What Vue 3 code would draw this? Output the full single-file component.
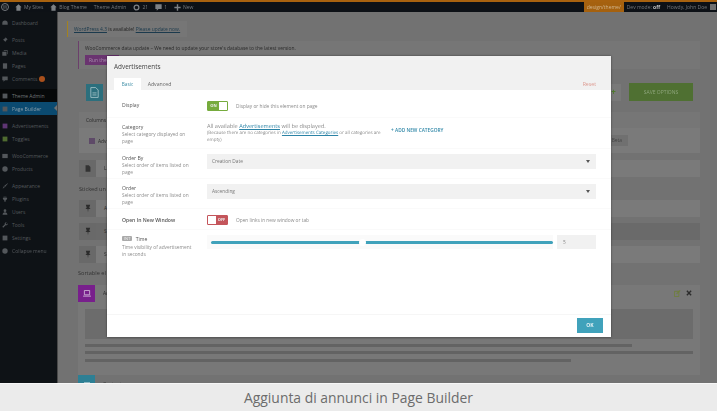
<script setup>
const topLinks = [
  { icon: 'home', label: 'My Sites' },
  { icon: 'home', label: 'Blog Theme' },
  { label: 'Theme Admin' },
  { icon: 'sync', label: '21' },
  { icon: 'bubble', label: '1' },
  { icon: 'plus', label: 'New' }
]

const shapes = {
  gauge: 'M5 1a4.500 4.500 0 0 1 4.500 4.500V8H.5V5.500A4.500 4.500 0 0 1 5 1z',
  pin: 'M6 .5 9.500 4 8 4.500 6.500 7 5.500 8 2 4.500 3 3.500 5.500 2zM3.500 6.500 .5 9.500',
  media: 'M.5 3h7v6.500h-7zM3 .5h6.500v6.500H8.500V1.500H3z',
  page: 'M1.500 .5h7v9h-7z',
  bubble: 'M.5 1h9v6H5L2.500 9.500V7h-2z',
  box: 'M.5 1.500h9v7h-9z',
  square: 'M1 1h8v8H1z',
  circle: 'M5 .5a4.500 4.500 0 1 1 0 9 4.500 4.500 0 0 1 0-9z',
  brush: 'M9.500 .5 10 1 5 6.500 3.500 5zM3 5.500 4.500 7 1 9.500z',
  plug: 'M3 .5h1v2.500h2V.5h1V3h1.500v2L6 7.500v2H4v-2L1.500 5V3H3z',
  user: 'M5 .5a2.300 2.300 0 1 1 0 4.600A2.300 2.300 0 0 1 5 .5zM1 9.500C1 7 2.500 5.500 5 5.500S9 7 9 9.500z',
  wrench: 'M9.500 2 7.500 4 6 2.500 8 .5C6 0 4 1.500 4.500 4L.5 8l1.500 1.500L6 5.500C8.500 6 10 4 9.500 2z'
}

const menu = [
  { label: 'Dashboard', top: 4, shape: 'gauge' },
  { label: 'Posts', top: 4, shape: 'pin' },
  { label: 'Media', shape: 'media' },
  { label: 'Pages', shape: 'page' },
  { label: 'Comments', badge: true, shape: 'bubble' },
  { label: 'Theme Admin', top: 4, cls: 'dark', shape: 'square' },
  { label: 'Page Builder', cls: 'current', shape: 'square' },
  { label: 'Advertisements', top: 4, shape: 'square', color: '#5e3573' },
  { label: 'Toggles', shape: 'square', color: '#4f6b30' },
  { label: 'WooCommerce', top: 4, shape: 'box' },
  { label: 'Products', shape: 'circle' },
  { label: 'Appearance', top: 4, shape: 'brush' },
  { label: 'Plugins', shape: 'plug' },
  { label: 'Users', shape: 'user' },
  { label: 'Tools', shape: 'wrench' },
  { label: 'Settings', shape: 'square' },
  { label: 'Collapse menu', shape: 'circle' }
]

const stuck = [
  { text: 'A', shade: '' },
  { text: 'S', shade: 'shade' },
  { text: 'S', shade: '' }
]
</script>

<template>
  <div class="shot">
    <div class="screen">
      <header class="adminbar">
        <span class="wp">W</span>
        <span v-for="link in topLinks" :key="link.label" class="top-link">
          <svg v-if="link.icon === 'home'" width="7" height="7" viewBox="0 0 10 10"><path d="M5 0.5 0.5 4.500h1.500V9.500h6V4.500h1.500z" fill="#7d8185" /></svg>
          <svg v-if="link.icon === 'sync'" width="7" height="7" viewBox="0 0 10 10"><circle cx="5" cy="5" r="3.400" fill="none" stroke="#7d8185" stroke-width="1.800" /></svg>
          <svg v-if="link.icon === 'bubble'" width="7" height="7" viewBox="0 0 10 10"><path d="M0.500 0.500h9v6.500H5L2.500 9.500V7H0.500z" fill="#7d8185" /></svg>
          <svg v-if="link.icon === 'plus'" width="7" height="7" viewBox="0 0 10 10"><path d="M4 0.500h2V4h3.500v2H6v3.500H4V6H0.500V4H4z" fill="#7d8185" /></svg>
          {{ link.label }}
        </span>
        <span class="bar-right">
          <span class="branch">design/theme/</span>
          <span class="dev">Dev mode: <b>off</b></span>
          <span class="howdy">Howdy, John Doe</span>
          <span class="avatar"></span>
        </span>
      </header>

      <div class="body">
        <aside class="sidebar">
          <div
            v-for="item in menu"
            :key="item.label"
            class="menu-item"
            :class="item.cls"
            :style="{ marginTop: (item.top || 0) + 'px' }"
          >
            <svg class="menu-icon" width="6" height="6" viewBox="0 0 10 10">
              <path :d="shapes[item.shape]" :fill="item.color || '#53575b'" />
            </svg>
            {{ item.label }}
            <span v-if="item.badge" class="badge"></span>
          </div>
        </aside>

        <main class="content">
          <div class="notice notice-yellow">
            <span class="u">WordPress 4.3</span> is available! <span class="u">Please update now.</span>
          </div>
          <div class="notice notice-purple">
            <div>WooCommerce data update – We need to update your store's database to the latest version.</div>
            <span class="run-btn">Run the</span>
          </div>

          <div class="toolbar">
            <span class="tool-icon teal">
              <svg width="9" height="11" viewBox="0 0 11 13"><path d="M1 .5h6l3 3v9H1zM3 7h5M3 9.500h5" fill="none" stroke="#a9c6cc" stroke-width="1" /></svg>
            </span>
            <span class="toolbar-fill"></span>
            <span class="plus-box">+</span>
            <span class="save">SAVE OPTIONS</span>
          </div>

          <div class="panel">
            <div class="panel-head">Columns</div>
            <div class="panel-row">
              <span class="sq"></span>Adv
              <span class="panel-btn">Beta</span>
            </div>
          </div>

          <div class="stub-row first-stub">
            <span class="tool-icon grey">
              <svg width="6" height="7" viewBox="0 0 11 13"><path d="M1 .5h6l3 3v9H1z" fill="#333" /></svg>
            </span>
            <span class="stub-fill">L</span>
          </div>
          <div class="section-label">Sticked un</div>

          <div v-for="(row, i) in stuck" :key="i" class="stub-row stuck">
            <span class="tool-icon grey">
              <svg width="6" height="9" viewBox="0 0 7 10"><path d="M1 .5h5L5 4l1.500 1.500H4L3.500 9.500 3 5.500H.5L2 4z" fill="#2c2c2c" /></svg>
            </span>
            <span class="stub-fill" :class="row.shade">{{ row.text }}</span>
          </div>

          <div class="section-label last">Sortable el</div>

          <div class="adv-card">
            <div class="adv-head">
              <span class="tool-icon purple">
                <svg width="8" height="7" viewBox="0 0 9 8"><path d="M1.500 .5h6v5h-6zM0 7h9" fill="none" stroke="#cfb3d6" stroke-width="1" /></svg>
              </span>
              <span class="adv-name">Adv</span>
              <span class="adv-actions">
                <svg width="7" height="7" viewBox="0 0 8 8"><path d="M.5 1.500h5v6h-5z" fill="none" stroke="#6f7f3a" /><path d="M3 4.500 7 .5" stroke="#6f7f3a" stroke-width="1.300" /></svg>
                <svg width="6" height="6" viewBox="0 0 7 7"><path d="M1 1l5 5M6 1 1 6" stroke="#2c2c2c" stroke-width="1.600" /></svg>
              </span>
            </div>
            <div class="adv-body">
              <div class="thumb"></div>
              <div class="line l1"></div>
              <div class="line l2"></div>
              <div class="line l3"></div>
            </div>
          </div>

          <div class="stub-row content-row">
            <span class="tool-icon teal-light">
              <svg width="6" height="6" viewBox="0 0 10 10"><path d="M0 2h10v6H0z" fill="#a9c6cc" /></svg>
            </span>
            <span class="content-name">Content</span>
          </div>
        </main>
      </div>

      <section class="modal">
        <div class="modal-head">
          <div class="modal-title">Advertisements</div>
          <div class="tabs">
            <span class="tab active">Basic</span>
            <span class="tab">Advanced</span>
            <span class="reset">Reset</span>
          </div>
        </div>

        <div class="form">
          <div class="field f-display">
            <div class="label"><b>Display</b></div>
            <div class="control">
              <span class="switch on"><span class="state">ON</span><span class="knob"></span></span>
              <span class="hint">Display or hide this element on page</span>
            </div>
          </div>

          <div class="field f-category">
            <div class="label"><b>Category</b><small>Select category displayed on page</small></div>
            <div class="control">
              <div class="cat-text">
                <div class="cat-main">All available <a>Advertisements</a> will be displayed.</div>
                <div>(Because there are no categories in <a>Advertisements Categories</a> or all categories are empty)</div>
              </div>
              <span class="add-cat">+ ADD NEW CATEGORY</span>
            </div>
          </div>

          <div class="field f-select">
            <div class="label"><b>Order By</b><small>Select order of items listed on page</small></div>
            <div class="control">
              <div class="select">Creation Date<i class="caret"></i></div>
            </div>
          </div>

          <div class="field f-select">
            <div class="label"><b>Order</b><small>Select order of items listed on page</small></div>
            <div class="control">
              <div class="select">Ascending<i class="caret"></i></div>
            </div>
          </div>

          <div class="field f-window">
            <div class="label"><b>Open In New Window</b></div>
            <div class="control">
              <span class="switch off"><span class="knob"></span><span class="state">OFF</span></span>
              <span class="hint">Open links in new window or tab</span>
            </div>
          </div>

          <div class="field f-time">
            <div class="label"><b><em class="tag">INT</em> Time</b><small>Time visibility of advertisement in seconds</small></div>
            <div class="control">
              <div class="slider">
                <div class="rail"><span class="thumb-dot"></span></div>
              </div>
              <div class="num">5</div>
            </div>
          </div>
        </div>

        <div class="modal-foot"><span class="ok">OK</span></div>
      </section>
    </div>

    <footer class="caption">Aggiunta di annunci in Page Builder</footer>
  </div>
</template>

<style>
html,
body {
  margin: 0;
  background: #ebebeb;
}
</style>

<style scoped>
.shot {
  width: 717px;
  height: 411px;
  overflow: hidden;
  font-family: "Open Sans", "Liberation Sans", sans-serif;
  display: flex;
  flex-direction: column;
}

.screen {
  position: relative;
  height: 384px;
  flex: none;
  overflow: hidden;
  background: #727272;
  border-bottom: 1px solid #f6f6f6;
  box-sizing: border-box;
}

.adminbar {
  height: 12px;
  box-sizing: border-box;
  border-top: 2px solid #a8620f;
  background: #0d1116;
  display: flex;
  align-items: center;
  padding-left: 1px;
  font-size: 5px;
  color: #75797d;
  white-space: nowrap;
  filter: blur(0.4px);
}

.wp {
  width: 8px;
  height: 8px;
  line-height: 7px;
  text-align: center;
  border-radius: 50%;
  border: 1px solid #75797d;
  box-sizing: border-box;
  font-size: 5px;
  margin-right: 6px;
}

.top-link {
  display: inline-flex;
  align-items: center;
  gap: 2px;
  margin-right: 7px;
}

.bar-right {
  margin-left: auto;
  display: flex;
  align-items: center;
  height: 10px;
}

.branch {
  background: #a5610f;
  color: #d2b78f;
  height: 10px;
  line-height: 10px;
  width: 40px;
  text-align: center;
  margin-right: 3px;
}

.dev {
  margin-right: 7px;
}

.dev b {
  color: #c2c2c2;
}

.avatar {
  width: 6px;
  height: 6px;
  margin: 0 1px 0 3px;
  background: #6f6f6f;
}

.body {
  display: flex;
  height: 372px;
  filter: blur(0.4px);
}

.sidebar {
  width: 58px;
  flex: none;
  background: #0e1216;
  border-right: 1px solid #4a4a4a;
  box-sizing: border-box;
  font-size: 5px;
  color: #55595d;
}

.menu-item {
  display: flex;
  align-items: center;
  height: 13px;
  padding-left: 2px;
  white-space: nowrap;
}

.menu-icon {
  margin-right: 4px;
  flex: none;
}

.menu-item.dark {
  background: #060809;
  color: #72767a;
}

.menu-item.current {
  background: #0b4a70;
  color: #8a9eaa;
  position: relative;
}

.menu-item.current::after {
  content: "";
  position: absolute;
  right: 0;
  top: 3px;
  border: 3px solid transparent;
  border-right-color: #727272;
}

.badge {
  width: 6px;
  height: 6px;
  border-radius: 50%;
  margin-left: 2px;
  background: #a9501c;
}

.content {
  flex: 1;
  padding: 9px 0 0 9px;
  min-width: 0;
  font-size: 4.9px;
  color: #2a2a2a;
  white-space: nowrap;
}

.notice {
  background: #767676;
  box-sizing: border-box;
}

.notice-yellow {
  width: 120px;
  height: 16px;
  line-height: 16px;
  padding-left: 6px;
  border-left: 1px solid #a3821f;
  color: #222;
}

.u {
  text-decoration: underline;
  color: #1b3a4d;
}

.notice-purple {
  width: 622px;
  height: 28px;
  margin: 4px 0 0 11px;
  border-left: 1px solid #6b3f6b;
  padding: 4px 0 0 6px;
}

.run-btn {
  display: block;
  margin-top: 4px;
  width: 34px;
  height: 10px;
  line-height: 10px;
  background: #6a3470;
  color: #a88fae;
  padding-left: 4px;
  box-sizing: border-box;
}

.toolbar {
  display: flex;
  align-items: center;
  margin: 14px 0 0 19px;
  height: 18px;
  width: 607px;
}

.tool-icon {
  width: 17px;
  height: 17px;
  display: flex;
  align-items: center;
  justify-content: center;
  flex: none;
}

.teal {
  background: #2c6f7d;
}

.teal-light {
  background: #2d7f94;
}

.purple {
  background: #781f8c;
}

.grey {
  background: #696969;
}

.toolbar-fill {
  flex: 1;
}

.plus-box {
  width: 15px;
  height: 17px;
  line-height: 16px;
  text-align: center;
  font-size: 8px;
  font-weight: 700;
  color: #4e7a2c;
  background: #797979;
  margin-right: 8px;
}

.save {
  width: 64px;
  height: 18px;
  line-height: 18px;
  text-align: center;
  background: #4f7032;
  color: #8ea57c;
  font-size: 5px;
}

.panel {
  margin: 11px 0 0 12px;
  width: 621px;
  height: 41px;
  background: #767676;
}

.panel-head {
  height: 16px;
  line-height: 16px;
  padding-left: 7px;
}

.panel-row {
  display: flex;
  align-items: center;
  gap: 3px;
  height: 25px;
  padding-left: 10px;
  background: #7a7a7a;
}

.sq {
  width: 6px;
  height: 6px;
  background: #5e4a68;
}

.panel-btn {
  margin: 0 72px 0 auto;
  width: 23px;
  height: 11px;
  line-height: 11px;
  text-align: right;
  padding-right: 6px;
  box-sizing: border-box;
  background: #707070;
  color: #444;
}

.stub-row {
  display: flex;
  align-items: center;
  width: 621px;
  margin: 0 0 0 12px;
  height: 17px;
}

.first-stub {
  margin-top: 7px;
}

.stub-fill {
  flex: 1;
  height: 17px;
  line-height: 17px;
  padding-left: 8px;
  background: #7a7a7a;
}

.stub-fill.shade {
  background: #6a6a6a;
}

.section-label {
  margin: 8px 0 7px 12px;
  font-size: 5.6px;
  height: 8px;
  line-height: 8px;
  color: #333;
}

.section-label.last {
  margin: 6px 0 8px 11px;
}

.stuck + .stuck {
  margin-top: 6px;
}

.adv-card {
  margin-left: 11px;
  width: 622px;
  height: 90px;
  background: #787878;
  box-sizing: border-box;
}

.adv-head {
  display: flex;
  align-items: flex-start;
  height: 24px;
}

.adv-name {
  margin: 5px 0 0 8px;
}

.adv-actions {
  margin: 5px 8px 0 auto;
  display: flex;
  gap: 5px;
}

.adv-body {
  padding: 0 7px;
}

.thumb {
  height: 30px;
  background: #6c6c6c;
}

.line {
  height: 3px;
  margin-top: 4.5px;
  background: #636363;
}

.l1 {
  width: 90%;
}

.l3 {
  width: 80%;
}

.content-row {
  margin-left: 11px;
}

.content-name {
  margin-left: 8px;
}

.modal {
  position: absolute;
  left: 107px;
  top: 56px;
  width: 504px;
  height: 281px;
  background: #fff;
  box-shadow: 0 0 2px rgba(0, 0, 0, 0.5);
  display: flex;
  flex-direction: column;
  color: #555;
  filter: blur(0.35px);
}

.modal-head {
  height: 34px;
  background: #f1f1f1;
  flex: none;
  display: flex;
  flex-direction: column;
  justify-content: space-between;
}

.modal-title {
  font-size: 6.4px;
  color: #444;
  padding: 6px 0 0 7px;
}

.tabs {
  display: flex;
  padding-left: 7px;
  font-size: 5.2px;
  height: 12px;
  color: #666;
}

.tab {
  height: 12px;
  line-height: 12px;
  width: 27px;
  text-align: center;
}

.tab.active {
  background: #fff;
  color: #3f8ea6;
  font-size: 4.7px;
}

.tab + .tab {
  width: 37px;
}

.reset {
  margin-left: auto;
  margin-right: 15px;
  line-height: 12px;
  color: #dd9a90;
}

.form {
  height: 224px;
  flex: none;
}

.field {
  display: flex;
  padding: 0 15px;
  box-sizing: border-box;
  border-bottom: 1px solid #fafafa;
}

.label {
  width: 85px;
  padding-right: 13px;
  box-sizing: border-box;
  flex: none;
  font-size: 4.9px;
  line-height: 7px;
  color: #8c8c8c;
}

.label b {
  display: block;
  font-weight: 400;
  color: #555;
  font-size: 5.1px;
  line-height: 8px;
  white-space: nowrap;
}

.label small {
  display: block;
  font-size: 4.8px;
}

.control {
  flex: 1;
  min-width: 0;
  display: flex;
  align-items: flex-start;
  font-size: 4.8px;
  color: #8a8a8a;
}

.hint {
  line-height: 10px;
}

.f-display {
  height: 28px;
  padding-top: 11px;
}

.f-category {
  height: 31px;
  padding-top: 5px;
}

.f-select {
  height: 30px;
  padding-top: 5px;
}

.f-window {
  height: 21px;
  padding-top: 6px;
}

.f-window .label {
  margin-top: 1px;
}

.f-window .label b {
  font-weight: 600;
}

.f-time {
  height: 54px;
  padding-top: 5px;
  border-bottom: 0;
}

.f-time .label b {
  margin-bottom: 1px;
}

.switch {
  width: 21px;
  height: 10px;
  border-radius: 1px;
  box-sizing: border-box;
  display: flex;
  border: 1px solid;
  flex: none;
  margin-right: 8px;
}

.switch.on {
  border-color: #76ab3d;
  background: #76ab3d;
}

.switch.off {
  border-color: #c4555b;
  background: #c4555b;
}

.state {
  flex: 1;
  text-align: center;
  color: #eee;
  font-size: 4px;
  font-weight: 700;
  line-height: 8px;
}

.knob {
  width: 8px;
  background: #fff;
  height: 8px;
  flex: none;
}

.cat-text {
  width: 176px;
  line-height: 7px;
  flex: none;
  font-size: 4.5px;
  text-rendering: geometricPrecision;
}

.cat-main {
  font-size: 5.6px;
}

.cat-text a {
  color: #2b83a6;
  text-decoration: underline;
}

.add-cat {
  margin: 4px 0 0 8px;
  color: #3188a8;
  font-weight: 600;
  font-size: 4.8px;
  line-height: 7px;
  white-space: nowrap;
}

.select {
  width: 389px;
  height: 15px;
  line-height: 15px;
  background: #f1f1f1;
  padding-left: 5px;
  box-sizing: border-box;
  position: relative;
  color: #777;
}

.caret {
  position: absolute;
  right: 6px;
  top: 6px;
  border: 2.5px solid transparent;
  border-top: 3px solid #555;
  border-bottom: 0;
}

.tag {
  display: inline-block;
  font-style: normal;
  background: #aaa;
  color: #eee;
  font-size: 4px;
  line-height: 5px;
  padding: 0 2px;
  border-radius: 1px;
  margin-right: 2px;
  vertical-align: 1px;
}

.slider {
  width: 346px;
  height: 14px;
  background: #fafafa;
  display: flex;
  align-items: center;
  padding: 0 0 0 4px;
  box-sizing: border-box;
  flex: none;
}

.rail {
  flex: 1;
  height: 3px;
  background: #40a2bb;
  border-radius: 2px;
  position: relative;
}

.thumb-dot {
  position: absolute;
  left: 148px;
  top: -2px;
  width: 7px;
  height: 7px;
  border-radius: 50%;
  background: #fff;
}

.num {
  width: 39px;
  height: 14px;
  line-height: 14px;
  background: #f1f1f1;
  margin-left: 4px;
  padding-left: 6px;
  box-sizing: border-box;
  color: #888;
}

.modal-foot {
  flex: 1;
  border-top: 1px solid #f6f6f6;
  display: flex;
  justify-content: flex-end;
  padding: 3px 8px 0 0;
  box-sizing: border-box;
}

.ok {
  width: 26px;
  height: 15px;
  line-height: 15px;
  text-align: center;
  background: #40a2bb;
  color: #e4f2f5;
  font-size: 5px;
  font-weight: 700;
}

.caption {
  flex: 1;
  background: #ebebeb;
  color: #6c6c6c;
  font-size: 13.9px;
  text-align: center;
  line-height: 27px;
}
</style>
